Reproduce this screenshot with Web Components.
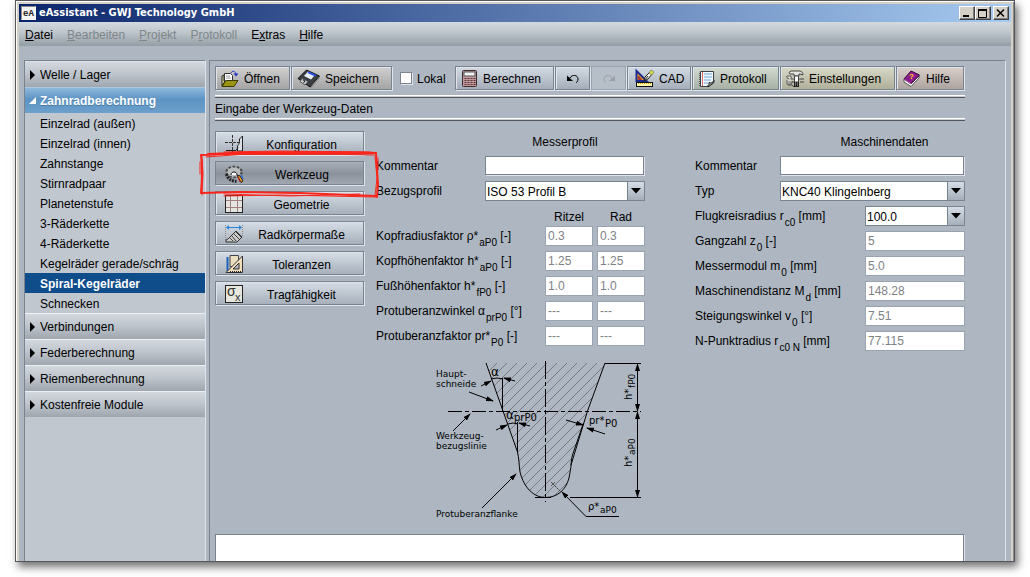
<!DOCTYPE html>
<html lang="de">
<head>
<meta charset="utf-8">
<meta name="viewport" content="width=device-width, initial-scale=1">
<title>eAssistant - GWJ Technology GmbH</title>
<style>
  body {
    margin: 0;
    background: #fff;
    color: #000;
    font: 12px/20px "Liberation Sans", Arial, sans-serif;
    --face: #aeb7c1;
    --dark: #7a8490;
    --light: #dfe4ea;
    --soft: #9aa4b0;
    --muted: #7e8287;
  }
</style>
</head>
<body>
<ea-app></ea-app>

<script>
/* ---------- icon set ---------- */
const ICONS = {
  open: [18, 18, `
    <path d="M1 6v10l3-5h-1V5z" fill="#e8e6a0" stroke="#222"/>
    <path d="M3.500 11V3.500h6l2 2V11z" fill="#fff" stroke="#333"/>
    <path d="M5 6h4M5 8h5" stroke="#999"/>
    <path d="M1 16.500 5 10.500h12l-4 6z" fill="#9a9614" stroke="#3c3a00"/>
    <path d="M10 3c1-2.500 4.500-2.500 5 1.500" fill="none" stroke="#2433c8"/>
    <path d="M12.500 3.500h5L15 6.500z" fill="#2433c8"/>`],
  save: [23, 19, `
    <path d="M1 9.500 9.500 1l13 6L13 18z" fill="#3a3d42" stroke="#111"/>
    <path d="m11 2.500 7 3.500-4 4.500-7-3.500z" fill="#e9eef8"/>
    <path d="m12 2.500 7.500 3.500-1.500 1.500-7.500-3.500z" fill="#2a4fe0"/>
    <path d="m5 9.500 6 3-3 3.500-5-3.500z" fill="#c9cdd4" stroke="#555"/>
    <path d="m6 11 2 1-1.500 2" fill="none" stroke="#222"/>
    <path d="m13 18.500 9.500-11v2l-8.500 10z" fill="#8a8a8a"/>`],
  calc: [17, 18, `
    <rect x="1.500" y=".5" width="14" height="16" rx="1" fill="#c09a9c" stroke="#3f2c30"/>
    <rect x="3" y="2" width="11" height="4" fill="#f4f4f4" stroke="#555"/>
    <path d="M3.500 8.500h2m1 0h2m1 0h2m1 0h2m-11 2h2m1 0h2m1 0h2m1 0h2m-11 2h2m1 0h2m1 0h2m1 0h2m-11 2h2m1 0h2m1 0h2m1 0h2" stroke="#5c3036"/>`],
  undo: [14, 12, `
    <path d="M4 5c2-4 8-3 8 1 0 2-1 3-2 4" fill="none" stroke="currentColor"/>
    <path d="M1 2.500V8h6z" fill="currentColor"/>`],
  redo: [14, 12, `
    <path d="M10 5C8 1 2 2 2 6c0 2 1 3 2 4" fill="none" stroke="currentColor"/>
    <path d="M13 2.500V8H7z" fill="currentColor"/>`],
  cad: [21, 19, `
    <path d="M3.500 2v10h10z" fill="#f0a020" stroke="#1b2a8c" stroke-width="2"/>
    <path d="M5.500 7v3.500h3z" fill="#a33" stroke="#a33"/>
    <rect x="3.500" y="13.500" width="16" height="4" fill="#fff3a8" stroke="#111"/>
    <path d="M5 14.500h13" stroke="#e2a900" stroke-dasharray="1 1"/>
    <path d="m11 12 1-4 5-5 2 2-4 5z" fill="#f3f3e6" stroke="#222"/>
    <path d="m16 4 2-3 3 2-2 3z" fill="#d8e23c" stroke="#666" stroke-width=".6"/>
    <path d="m11 12 4-5" stroke="#222"/>`],
  protocol: [17, 18, `
    <path d="M2.500 1.500h13v10l-5 5h-8z" fill="#f2f7fb" stroke="#3b4247"/>
    <path d="M6 4h8M6 7h8M6 10h7M6 13h4" stroke="#69a7dc"/>
    <path d="M4.500 2v14" stroke="#d86a6a"/>
    <path d="M9 16.500c2-1 2-2 2-4 2 1 4 0 5-2v2l-5 4z" fill="#9aa0a5" stroke="#222"/>
    <path d="M1.500 3v13" stroke="#555" stroke-dasharray="1 1"/>`],
  settings: [18, 18, `
    <path d="M3 8.500 1 8V6h4v3h9M2 12h10M1 10v4h4l2-3" fill="#e9e9e4" stroke="#555"/>
    <path d="M3 2.500 5 1h8c3 0 4 2 4 4l-3-1h-1v2H8V4H4z" fill="#e4e4e0" stroke="#444"/>
    <path d="M8.500 6h4v6h-4z" fill="#fff" stroke="#444"/>
    <path d="M8 12h5v5H8z" fill="#222"/>
    <path d="M9 13h3M9 15h3" stroke="#bbb" stroke-dasharray="1 1"/>
    <path d="M14 9h4M14 12h4M2 15h4l2 2" stroke="#444" fill="none"/>`],
  help: [19, 17, `
    <path d="M2 9v3l7 4.500 8-8.500V6l-8 8z" fill="#fff" stroke="#333" stroke-width=".8"/>
    <path d="m2 9 7-8 8.500 4L9 13.500z" fill="#8d1a8c" stroke="#3b0640"/>
    <path d="m2.500 9.500 6.500 4" stroke="#c45fc4"/>
    <text x="7" y="9" font-family="Liberation Sans" font-size="8" font-weight="700" fill="#ffd61e">?</text>`],
  config: [18, 18, `
    <path d="M0 7.500h17M7.500 0v17" stroke="#333" stroke-dasharray="3 1"/>
    <path d="M17.500 1v15h-5v-5c2-2 2-4 2-7l3-3z" fill="#d9dee2" stroke="#222"/>
    <path d="M1 15.500h10l2-3" fill="none" stroke="#222"/>`],
  tool: [19, 18, `
    <ellipse cx="9" cy="7" rx="7.500" ry="5" fill="#b4b8b8" stroke="#4a4a4a" stroke-width="2.500" stroke-dasharray="2.500 1.500"/>
    <ellipse cx="9" cy="7" rx="6.500" ry="4.500" fill="#b9bdbd"/>
    <path d="M1.500 9c1 5 5 7 10 7.500" fill="none" stroke="#222" stroke-width="3" stroke-dasharray="2 1"/>
    <path d="M6 10c0-4 6-4 6 0" fill="#fff" stroke="#111"/>
    <path d="m12 10 3 1 3 5-2 1.500z" fill="#f0a020" stroke="#222"/>
    <path d="m16 10 2 4" stroke="#2a6fd0" stroke-width="1.500"/>
    <path d="m13 12 2 5" stroke="#c22"/>`],
  geometry: [18, 18, `
    <rect x=".5" y=".5" width="17" height="17" fill="#e4e4e0" stroke="#222"/>
    <path d="M5.500 1v16M12.500 1v16M1 5.500h16M1 12.500h16" stroke="#a08080"/>`],
  body: [18, 18, `
    <path d="M.5 0v16M17.500 0v12" stroke="#888" stroke-dasharray="1 1"/>
    <path d="M2 2.500h14" stroke="#2a86d6"/>
    <path d="M1 2.500 4 0v5zM17 2.500 14 0v5z" fill="#2a86d6"/>
    <path d="m3 14 8-8 6 6-5 5H1v-2z" fill="#c9cac8" stroke="#333"/>
    <path d="m5 13 3 3M7 11l4 5M9 9l5 5M11 7l5 5" stroke="#444"/>`],
  tolerance: [18, 18, `
    <path d="M5 .5h8.500v11H5z" fill="#e9dfc0" stroke="#444"/>
    <path d="M2.500 2v14" stroke="#1c62b8" stroke-width="2"/>
    <path d="M17.500 1v16.500H1z" fill="#f0dfba" stroke="#333"/>
    <path d="M14 8v6H8z" fill="#aeb7c1" stroke="#333"/>
    <path d="M5 17h12" stroke="#222" stroke-dasharray="1 1" stroke-width="2"/>`],
  strength: [18, 18, `
    <rect x=".5" y=".5" width="17" height="17" fill="#e6e6dc" stroke="#222"/>
    <text x="2" y="11" font-family="Liberation Sans" font-size="14" fill="#333">σ</text>
    <text x="10" y="16" font-family="Liberation Sans" font-size="11" fill="#333">x</text>`]
};
const icon = name => {
  const [w, h, body] = ICONS[name];
  return `<svg class="icon" width="${w}" height="${h}" viewBox="0 0 ${w} ${h}" aria-hidden="true">${body}</svg>`;
};

const BASE = `
  *, *::before { box-sizing: border-box; }
  button, input, select, textarea { font: inherit; color: inherit; margin: 0; border-radius: 0; }
  svg { display: block; flex: none; overflow: visible; }
`;
class EaElement extends HTMLElement {
  connectedCallback() {
    if (this.shadowRoot) return;
    this.attachShadow({ mode: "open" }).innerHTML = `<style>${BASE}${this.css()}</style>${this.html()}`;
  }
}

/* ---------- window frame ---------- */
customElements.define("ea-app", class extends EaElement {
  css() { return `
    :host { display: flex; min-height: calc(100vh - 15px); margin: 0 15px 15px; box-sizing: border-box;
      flex-direction: column; border: 1px solid #55575c; padding: 3px 3px 0; background: #d4d0c8;
      box-shadow: inset 1px 1px #fff, inset -1px 0 #8a8a86, 3px 5px 8px rgba(0,0,0,.55); }
    .client { flex: 1; display: flex; gap: 3px; padding: 14px 5px 0; background: var(--face); }
    ea-sidebar { flex: none; width: 182px; }
    ea-workspace { flex: 1; min-width: 0; }
  `; }
  html() { return `
    <ea-titlebar>eAssistant - GWJ Technology GmbH</ea-titlebar>
    <ea-menubar></ea-menubar>
    <div class="client"><ea-sidebar></ea-sidebar><ea-workspace></ea-workspace></div>
  `; }
});

customElements.define("ea-titlebar", class extends EaElement {
  css() { return `
    :host { display: flex; align-items: center; height: 18px; padding: 0 2px; color: #fff;
      background: linear-gradient(90deg, #0a246a, #a6caf0);
      font: bold 11px/18px "DejaVu Sans Condensed", "DejaVu Sans", sans-serif; }
    .logo { margin-right: 3px; }
    h1 { flex: 1; margin: 0; font: inherit; }
    button { width: 16px; height: 14px; padding: 0; display: grid; place-items: center; background: #d4d0c8;
      border: 1px solid; border-color: #fff #404040 #404040 #fff; box-shadow: inset -1px -1px #808080; }
    .close { margin-left: 2px; }
  `; }
  html() { return `
    <svg class="logo" width="15" height="14" viewBox="0 0 15 14" aria-hidden="true">
      <rect width="15" height="14" fill="#f4f4f4"/><path d="M.5 13.500V.5h14" stroke="#888" fill="none"/>
      <text x="2" y="10" font-family="Liberation Mono" font-size="9" font-weight="700" fill="#222">eA</text></svg>
    <h1><slot></slot></h1>
    <button aria-label="Minimieren"><svg width="10" height="8"><path d="M1 7h6" stroke="#000" stroke-width="2"/></svg></button>
    <button aria-label="Maximieren"><svg width="10" height="9"><path d="M.5 0v8.500h8V0" stroke="#000" fill="none"/><path d="M0 1h9" stroke="#000" stroke-width="2"/></svg></button>
    <button class="close" aria-label="Schließen"><svg width="10" height="8"><path d="m1 .5 7 7m0-7-7 7" stroke="#000" stroke-width="1.500"/></svg></button>
  `; }
});

customElements.define("ea-menubar", class extends EaElement {
  css() { return `
    :host { display: block; }
    nav { display: flex; gap: 14px; height: 24px; padding: 0 6px;
      background: linear-gradient(#d3dadf, #c0c8ce 40%, #949ea5); }
    button { border: 0; padding: 0; background: none; line-height: 26px; }
    button:disabled { color: #7f8689; }
  `; }
  html() { return `<nav>
    <button><u>D</u>atei</button><button disabled><u>B</u>earbeiten</button><button disabled><u>P</u>rojekt</button>
    <button disabled>P<u>r</u>otokoll</button><button>E<u>x</u>tras</button><button><u>H</u>ilfe</button>
  </nav>`; }
});

/* ---------- module navigation ---------- */
const MODULES = [
  ["Welle / Lager"],
  ["Zahnradberechnung", ["Einzelrad (außen)", "Einzelrad (innen)", "Zahnstange", "Stirnradpaar", "Planetenstufe",
    "3-Räderkette", "4-Räderkette", "Kegelräder gerade/schräg", "Spiral-Kegelräder", "Schnecken"]],
  ["Verbindungen"], ["Federberechnung"], ["Riemenberechnung"], ["Kostenfreie Module"]
];
customElements.define("ea-sidebar", class extends EaElement {
  css() { return `
    :host { display: block; box-sizing: border-box; background: #c0c7cf; border: 1px solid;
      border-color: var(--dark) var(--light) transparent var(--dark); border-bottom: 0; }
    button { display: flex; align-items: center; gap: 4px; width: 100%; height: 26px; padding: 0 5px; text-align: left;
      border: 0; border-top: 1px solid #eef1f4; background: linear-gradient(#d3d8de, #bcc3ca 50%, #9fa6ad); }
    section:first-child button { border-top-color: #dde2e7; }
    .open { color: #fff; font-weight: bold; border-top-color: #a9c8e0; text-shadow: 0 1px #4a7ba8;
      background: linear-gradient(#8fb9dc, #5c93c4 45%, #6da0cb); }
    ul { margin: 0; padding: 0; list-style: none; }
    a { display: block; height: 20px; line-height: 22px; padding-left: 15px; color: inherit; text-decoration: none; }
    a[aria-current] { background: #0f4c8a; color: #fff; font-weight: bold; }
  `; }
  html() { return `<nav>${MODULES.map(([name, items]) => `<section>
    <button class="${items ? "open" : ""}" aria-expanded="${!!items}"><svg width="6" height="10" viewBox="0 0 6 10" aria-hidden="true">${items
      ? `<path d="M6 1v7h-7z" fill="#fff"/>` : `<path d="M0 0v10l5-5z" fill="#000"/>`}</svg>${name}</button>
    ${items ? `<ul>${items.map(i => `<li><a href="#"${i === "Spiral-Kegelräder" ? ' aria-current="page"' : ""}>${i}</a></li>`).join("")}</ul>` : ""}
  </section>`).join("")}</nav>`; }
});

/* ---------- buttons ---------- */
const BEVEL = `border: 1px solid; border-color: var(--dark) var(--light) var(--light) var(--dark);
  box-shadow: inset -1px -1px var(--dark), inset 1px 1px var(--light);`;

customElements.define("ea-tool", class extends EaElement {
  css() { return `
    :host { display: block; flex: none; --a: #d3dae3; --b: #a3acb7; }
    :host([tone=gray]) { --a: #d0d0d0; --b: #a2a2a2; }
    :host([tone=green]) { --a: #d2dad2; --b: #a6afa2; }
    :host([tone=olive]) { --a: #d9d9c9; --b: #adad97; }
    :host([tone=rose]) { --a: #d9d0cb; --b: #aba19d; }
    button { display: flex; align-items: center; gap: 5px; width: 100%; height: 25px; padding: 0 5px; white-space: nowrap;
      ${BEVEL} background: linear-gradient(var(--a), var(--b)); }
    :host([bare]) button { justify-content: center; }
    button:disabled { color: #9a9fa5; border-color: var(--soft) var(--light) var(--light) var(--soft);
      box-shadow: inset -1px -1px var(--soft); background: #b6bec8; }
  `; }
  html() { return `<button ${this.hasAttribute("disabled") ? "disabled" : ""} ${this.title ? `aria-label="${this.title}"` : ""}>${icon(this.getAttribute("icon"))}<slot></slot></button>`; }
});

customElements.define("ea-mode", class extends EaElement {
  css() { return `
    :host { display: block; }
    button { display: flex; align-items: center; width: 100%; height: 25px; padding: 0 4px 0 9px;
      ${BEVEL} background: linear-gradient(#d6dde6, #a5aeb9); }
    :host([active]) button { background: linear-gradient(#a9b0b9, #8b929b 50%, #a2a9b2); box-shadow: inset -1px -1px var(--dark); }
    span { flex: 1; text-align: center; padding-top: 2px; }
  `; }
  html() { return `<button aria-pressed="${this.hasAttribute("active")}">${icon(this.getAttribute("icon"))}<span><slot></slot></span></button>`; }
});

/* ---------- form row: a label with one or two controls ---------- */
customElements.define("ea-row", class extends EaElement {
  css() { return `
    :host { display: flex; align-items: center; gap: 4px; height: 20px; }
    label { flex: 1; white-space: nowrap; }
    sub { font-size: 10px; line-height: 0; vertical-align: -6px; margin-left: 1px; }
    .box { display: grid; flex: none; height: 20px; }
    .box > * { grid-area: 1 / 1; }
    input, select { width: 100%; min-width: 0; height: 20px; padding: 0 2px; background: #fff; ${BEVEL} box-shadow: inset -1px -1px var(--dark); }
    input:disabled { color: var(--muted); border-color: var(--soft); box-shadow: none; -webkit-text-fill-color: var(--muted); }
    select { appearance: none; padding: 0 18px 0 1px; border-color: var(--dark); box-shadow: none; }
    .arrow { justify-self: end; display: grid; place-items: center; width: 18px; height: 20px; pointer-events: none;
      border: 1px solid var(--dark); background: linear-gradient(#d6dde6, #a5aeb9); }
  `; }
  html() {
    const w = this.getAttribute("width");
    const values = (this.getAttribute("values") ?? "").split("|");
    const off = this.hasAttribute("off") ? "disabled" : "";
    const cells = values.map((v, i) => `<div class="box" style="width:${w}px">${this.hasAttribute("choice")
      ? `<select id="c${i}"><option>${v}</option></select><span class="arrow"><svg width="10" height="6"><path d="M0 0h10L5 5.500z"/></svg></span>`
      : `<input id="c${i}" value="${v}" ${i ? 'aria-label="Rad"' : ""} ${off}>`}</div>`);
    return `<label for="c0">${this.getAttribute("label")}</label>${cells.join("")}`;
  }
});

/* ---------- tool profile drawing ---------- */
customElements.define("ea-profile", class extends EaElement {
  css() { return `
    :host { display: block; }
    text { font-family: "DejaVu Sans", sans-serif; font-size: 9px; fill: #000; }
    .m { font-size: 12px; } .s { font-size: 10px; }
    .l { fill: none; stroke: #000; }
  `; }
  html() {
    const tooth = "M61 8 78 56 92.500 97C94 103 94 110 95 117 99 133 109 142.500 120.500 142.500S141 135 144 123C146 112 146 105 148.500 97L162.500 56 180 8z";
    return `<svg width="219" height="173" viewBox="1 -4 219 173" role="img" aria-label="Werkzeugprofil">
    <defs>
      <pattern id="h" width="10" height="10" patternUnits="userSpaceOnUse"><path d="M-1 11 11-1M-1 1 1-1M9 11l2-2" stroke="#767c84" fill="none"/></pattern>
      <marker id="a" markerWidth="8" markerHeight="6" refX="7" refY="3" orient="auto-start-reverse" markerUnits="userSpaceOnUse"><path d="M0 .5v5L8 3z"/></marker>
    </defs>
    <path d="${tooth}" fill="url(#h)"/>
    <path class="l" d="M61 8 78 56 92.500 97C94 103 94 110 95 117 99 133 109 142.500 120.500 142.500S141 135 144 123C145 117 146 113 146 110L162.500 56 180 8M146 110C146.500 104 147 101 148.500 97L158.500 68"/>
    <path class="l" d="M180 8.500h36M110 142.500h16M145 142.500h71M77.500 23v33M92.500 67v30"/>
    <path class="l" d="M23 56.500h193" stroke-dasharray="14 3 4 3"/>
    <path class="l" d="M120.500 6v141" stroke-dasharray="18 3 4 3"/>
    <g class="l">
      <path d="M212.500 9v47" marker-end="url(#a)" marker-start="url(#a)"/>
      <path d="M212.500 57v85" marker-end="url(#a)" marker-start="url(#a)"/>
      <path d="M66 24q6-2 12 0M83 69q5-2 10 0"/>
      <path d="m56 31 10-5" marker-end="url(#a)"/><path d="m90 26-11-3" marker-end="url(#a)"/>
      <path d="m71 75 11-5" marker-end="url(#a)"/><path d="m105 71-11-3" marker-end="url(#a)"/>
      <path d="m141 65 17 5" marker-end="url(#a)"/><path d="m180 79-18-6" marker-end="url(#a)"/>
      <path d="m44 37 24 9" marker-end="url(#a)"/><path d="m28 76 17-17" marker-end="url(#a)"/>
      <path d="m57 153 34-34" marker-end="url(#a)"/><path d="M194 161.500h-33L137 137" marker-end="url(#a)"/>
    </g>
    <path d="m126 127 4 4m0-4-4 4" stroke="#555"/><path d="m130 131 6 6" stroke="#333" stroke-dasharray="2 1"/>
    <text x="11" y="22">Haupt-</text><text x="11" y="32">schneide</text>
    <text x="11" y="84">Werkzeug-</text><text x="11" y="94">bezugslinie</text>
    <text x="11" y="162">Protuberanzflanke</text>
    <text class="m" x="66" y="21">α</text>
    <text class="m" x="81" y="64">α</text><text class="s" x="89" y="66">prP0</text>
    <text class="s" x="164" y="69">pr*</text><text class="s" x="180" y="72">P0</text>
    <text class="s" x="163" y="155">ρ*</text><text x="175" y="158">aP0</text>
    <g transform="translate(207 45) rotate(-90)"><text class="s">h*</text><text x="12" y="3">fP0</text></g>
    <g transform="translate(207 112) rotate(-90)"><text class="s">h*</text><text x="12" y="3">aP0</text></g>
    </svg>`;
  }
});

/* ---------- hand-drawn marker round the active button ---------- */
customElements.define("ea-marker", class extends EaElement {
  css() { return `:host { display: block; pointer-events: none; } path { fill: none; stroke: #f8261c; stroke-linecap: round; }`; }
  html() { return `<svg width="180" height="50" viewBox="0 0 180 50" aria-hidden="true">
    <path stroke-width="2" d="M8 4Q60 2 110 2T176 3M2 5 26 4 90 4 176 3"/>
    <path d="M6 7 60 3 120 4 174 5M24 2 80 1 170 2"/>
    <path stroke-width="2" d="M1 5Q3 20 1 43M1 43 40 42 100 43 176 46"/>
    <path d="M2 7 3 24 2 45M24 46 80 45 176 47M24 44 90 46 160 44M0 12v12"/>
    <path stroke-width="2" d="M176 3 177 20 178 34 177 47"/>
    <path d="M175 6 177 28 175 46M178 8v12"/>
  </svg>`; }
});

/* ---------- work area ---------- */
customElements.define("ea-workspace", class extends EaElement {
  css() { return `
    :host { display: flex; flex-direction: column; box-sizing: border-box; padding: 5px 40px 0 5px;
      border: 1px solid; border-color: var(--dark) var(--light) transparent var(--dark); border-bottom: 0; }
    .tools { display: flex; align-items: center; height: 25px; margin-bottom: 4px; }
    .local { display: flex; align-items: center; gap: 4px; width: 62px; padding-left: 7px; }
    .local input { appearance: none; width: 13px; height: 13px; margin: 0; background: #fff; border: 1px solid;
      border-color: var(--dark) var(--light) var(--light) var(--dark); box-shadow: inset -1px -1px var(--dark); }
    h2 { margin: 0; font: inherit; height: 26px; line-height: 22px; border: solid #55575c; border-width: 0 0 1px;
      background: linear-gradient(#fff 1px, #c8ccd0 1px 2px, #55575c 2px 3px, transparent 3px 23px, #fff 23px 24px, #c8ccd0 24px);
      padding-top: 3px; }
    .work { display: grid; grid-template-columns: 150px 269fr 309fr; column-gap: 11px; padding: 10px 0; }
    .modes { position: relative; display: grid; gap: 5px; align-content: start; }
    ea-marker { position: absolute; left: -15px; top: 19px; }
    .form { display: grid; gap: 5px; align-content: start; }
    .machine { padding-left: 39px; }
    h3 { margin: 0; height: 20px; font: inherit; line-height: 22px; text-align: center; padding-left: 109px; }
    .pair { display: flex; gap: 4px; justify-content: flex-end; line-height: 22px; height: 20px; margin-bottom: -5px; text-align: center; }
    .pair span { width: 48px; }
    ea-profile { margin-left: 50px; }
    textarea { display: block; width: 100%; min-height: 26px; height: 26px; flex: 1 0 26px; resize: none; background: #fff; padding: 2px;
      border: 1px solid; border-color: var(--dark) var(--light) transparent var(--dark); border-bottom: 0; box-shadow: inset -1px 0 var(--dark); outline: 0; }
  `; }
  html() { return `
    <div class="tools">
      <ea-tool icon="open" tone="gray" style="width:76px">Öffnen</ea-tool>
      <ea-tool icon="save" tone="gray" style="width:102px">Speichern</ea-tool>
      <label class="local"><input type="checkbox">Lokal</label>
      <ea-tool icon="calc" style="width:100px">Berechnen</ea-tool>
      <ea-tool icon="undo" bare title="Rückgängig" style="width:36px"></ea-tool>
      <ea-tool icon="redo" bare disabled title="Wiederholen" style="width:36px"></ea-tool>
      <ea-tool icon="cad" style="width:65px">CAD</ea-tool>
      <ea-tool icon="protocol" tone="green" style="width:88px">Protokoll</ea-tool>
      <ea-tool icon="settings" tone="olive" style="width:116px">Einstellungen</ea-tool>
      <ea-tool icon="help" tone="rose" style="width:69px">Hilfe</ea-tool>
    </div>
    <h2>Eingabe der Werkzeug-Daten</h2>
    <div class="work">
      <div class="modes">
        <ea-mode icon="config">Konfiguration</ea-mode>
        <ea-mode icon="tool" active>Werkzeug</ea-mode>
        <ea-mode icon="geometry">Geometrie</ea-mode>
        <ea-mode icon="body">Radkörpermaße</ea-mode>
        <ea-mode icon="tolerance">Toleranzen</ea-mode>
        <ea-mode icon="strength">Tragfähigkeit</ea-mode>
        <ea-marker></ea-marker>
      </div>
      <div class="form">
        <h3>Messerprofil</h3>
        <ea-row label="Kommentar" width="160"></ea-row>
        <ea-row label="Bezugsprofil" width="160" choice values="ISO 53 Profil B"></ea-row>
        <div class="pair"><span>Ritzel</span><span>Rad</span></div>
        <ea-row off width="48" values="0.3|0.3" label="Kopfradiusfaktor ρ*<sub>aP0</sub> [-]"></ea-row>
        <ea-row off width="48" values="1.25|1.25" label="Kopfhöhenfaktor h*<sub>aP0</sub> [-]"></ea-row>
        <ea-row off width="48" values="1.0|1.0" label="Fußhöhenfaktor h*<sub>fP0</sub> [-]"></ea-row>
        <ea-row off width="48" values="---|---" label="Protuberanzwinkel α<sub>prP0</sub> [°]"></ea-row>
        <ea-row off width="48" values="---|---" label="Protuberanzfaktor pr*<sub>P0</sub> [-]"></ea-row>
        <ea-profile></ea-profile>
      </div>
      <div class="form machine">
        <h3>Maschinendaten</h3>
        <ea-row label="Kommentar" width="185"></ea-row>
        <ea-row label="Typ" width="185" choice values="KNC40 Klingelnberg"></ea-row>
        <ea-row label="Flugkreisradius r<sub>c0</sub> [mm]" width="100" choice values="100.0"></ea-row>
        <ea-row off width="100" values="5" label="Gangzahl z<sub>0</sub> [-]"></ea-row>
        <ea-row off width="100" values="5.0" label="Messermodul m<sub>0</sub> [mm]"></ea-row>
        <ea-row off width="100" values="148.28" label="Maschinendistanz M<sub>d</sub> [mm]"></ea-row>
        <ea-row off width="100" values="7.51" label="Steigungswinkel v<sub>0</sub> [°]"></ea-row>
        <ea-row off width="100" values="77.115" label="N-Punktradius r<sub>c0 N</sub> [mm]"></ea-row>
      </div>
    </div>
    <textarea aria-label="Meldungen"></textarea>
  `; }
});
</script>
</body>
</html>
